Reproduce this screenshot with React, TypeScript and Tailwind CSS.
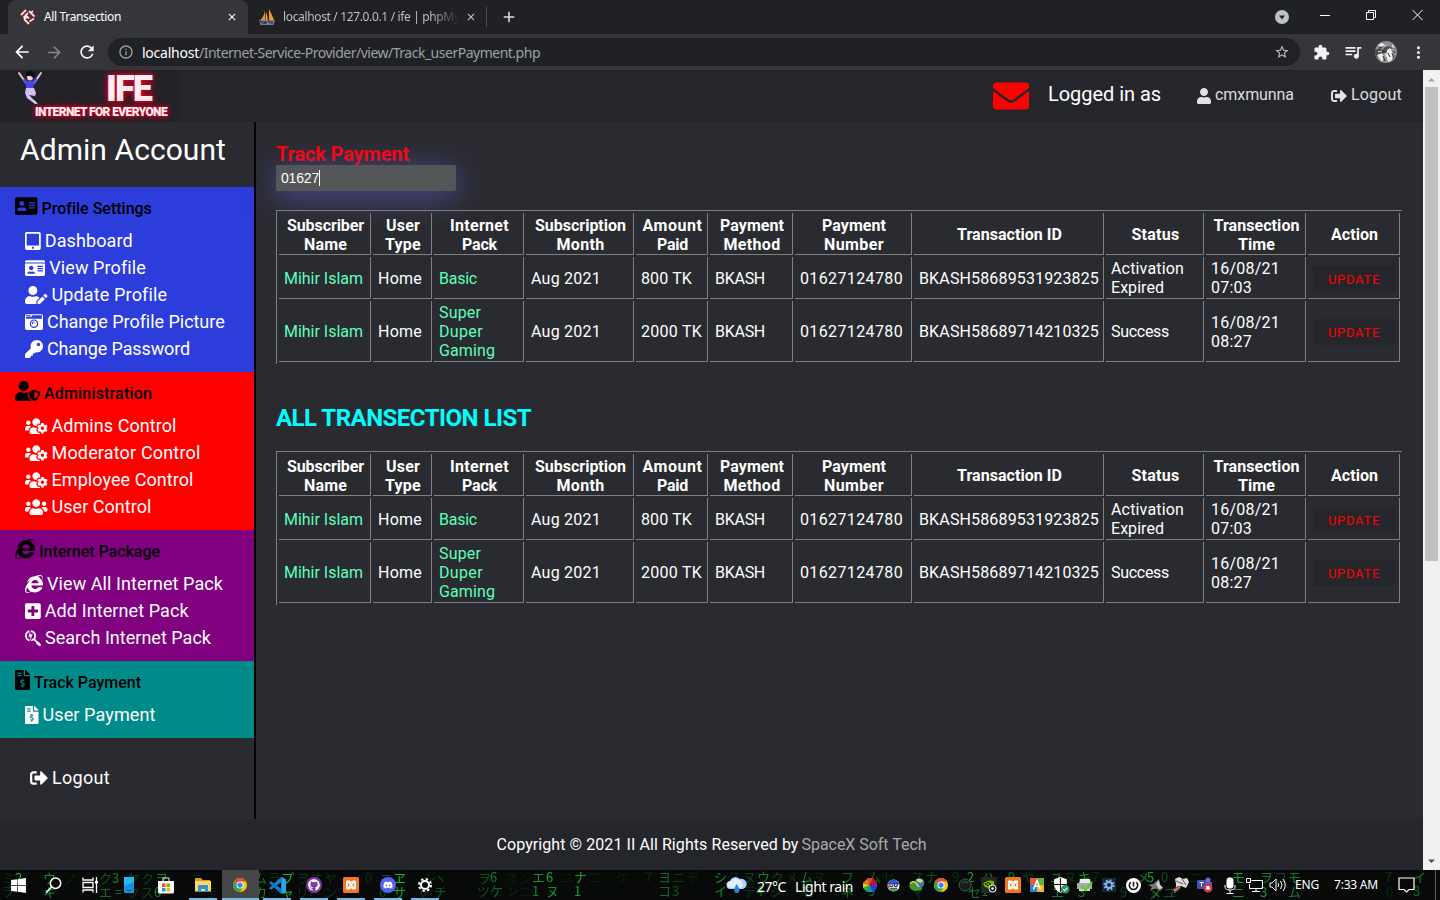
import { useLayoutEffect, useRef, useState, type ReactNode } from "react";
import {
  FaAddressCard, FaCameraRetro, FaEnvelope, FaFileInvoiceDollar, FaIdCard, FaInternetExplorer, FaKey,
  FaPlusSquare, FaSearchengin, FaSignOutAlt, FaTabletAlt, FaUser, FaUserEdit, FaUsers, FaUsersCog,
  FaUserShield, FaGithub, FaDiscord, FaWindows,
} from "react-icons/fa";
import {
  MdArrowBack, MdArrowForward, MdRefresh, MdOutlineInfo, MdStarBorder, MdExtension, MdQueueMusic, MdMoreVert,
  MdClose, MdAdd,
} from "react-icons/md";

/* A run of text whose tracking is adjusted so that it fills the given width. */
function Fit({ w, className = "", children }: { w: number; className?: string; children: string }) {
  const ref = useRef<HTMLSpanElement>(null);
  const [tracking, setTracking] = useState(0);
  useLayoutEffect(() => {
    const el = ref.current;
    if (!el) return;
    el.style.letterSpacing = "0px";
    const value = (w - el.getBoundingClientRect().width) / children.length;
    el.style.letterSpacing = `${value}px`;
    setTracking(value);
  }, [w, children]);
  return (
    <span ref={ref} className={`inline-block shrink-0 whitespace-nowrap ${className}`} style={{ letterSpacing: `${tracking}px` }}>
      {children}
    </span>
  );
}

/* ---------- Browser chrome ---------- */

function IfeFavicon() {
  return (
    <svg viewBox="0 0 16 16" className="h-4 w-4 shrink-0">
      <g fill="none" stroke="#b5303a" strokeWidth="3">
        <path d="M1 6 6 1M3.500 8.500 8 4M6 6.500l3 3M9 2l5.500 5.500M10.500 4l2.500-2M4 10l5 5M4 10l2.500-1.500M9.500 12.500 14 9.500" />
      </g>
      <g fill="none" stroke="#fff" strokeWidth="1.500">
        <path d="M1 6 6 1M3.500 8.500 8 4M6 6.500l3 3M9 2l5.500 5.500M10.500 4l2.500-2M4 10l5 5M4 10l2.500-1.500M9.500 12.500 14 9.500" />
      </g>
    </svg>
  );
}

function SailFavicon() {
  return (
    <svg viewBox="0 0 16 16" className="h-4 w-4 shrink-0">
      <path d="M6 1v10H1.500C4 8 5.500 5 6 1z" fill="#e8902a" />
      <path d="M7 3c1 3 1.500 5 1.500 8H6.500z" fill="#f6b04a" />
      <path d="M10 0c2 4 3.500 7 5 11h-5z" fill="#f29c1f" />
      <path d="M0 11h16l-1.500 5h-13z" fill="#777a96" />
      <path d="M1 12.500h2v2M5 12v3M7 12v3M5 13.500h2M9 12.500h2v2M13 12v3" stroke="#22243a" fill="none" />
    </svg>
  );
}

function TabStrip() {
  return (
    <div className="flex h-[34px] bg-[#202124] text-[12px]">
      <div className="ml-2 flex h-full w-[240px] items-center rounded-t-lg bg-[#35363a] pl-3 pr-2.5">
        <IfeFavicon />
        <Fit w={77} className="ml-[8px] text-white">All Transection</Fit>
        <MdClose className="ml-auto h-3 w-3 text-white" />
      </div>
      <div className="flex w-[238px] items-center pl-[11px]">
        <SailFavicon />
        <div className="ml-2 w-[176px] overflow-hidden bg-linear-to-r from-[#c5c8cc] from-85% to-[#202124] bg-clip-text text-transparent">
          <Fit w={184}>localhost / 127.0.0.1 / ife | phpMyA</Fit>
        </div>
        <MdClose className="ml-1.5 h-3 w-3 shrink-0 text-[#c5c8cc]" />
      </div>
      <div className="flex items-center">
        <div className="h-5 w-px bg-[#4a4c50]" />
        <MdAdd className="ml-[13px] h-[18px] w-[18px] text-[#dfe1e5]" />
      </div>
      <div className="ml-auto flex items-center">
        <svg viewBox="0 0 14 14" className="mr-[31px] h-[14px] w-[14px]">
          <circle cx="7" cy="7" r="7" fill="#bdc1c6" />
          <path d="M4 5.500h6L7 9.500z" fill="#202124" />
        </svg>
        <svg viewBox="0 0 103 12" className="mb-1 mr-[17px] h-3 w-[103px]" fill="none" stroke="#fff">
          <path d="M0 6.500h10" />
          <path d="M46.500 3.500h7v7h-7zM48.500 3v-1.500h7v7H54" />
          <path d="M92.500 1l10 10M102.500 1l-10 10" />
        </svg>
      </div>
    </div>
  );
}

function Avatar() {
  return (
    <svg viewBox="0 0 22 22" className="h-[22px] w-[22px]">
      <clipPath id="avatar"><circle cx="11" cy="11" r="11" /></clipPath>
      <g clipPath="url(#avatar)">
        <rect width="22" height="22" fill="#8b8d8f" />
        <path d="M0 9l5-2 3 2 2-4 6 1 5 6-5-1-3 3-4-2-4 3-5 1z" fill="#4a4c4e" />
        <path d="M3 4l4-2 3 2-4 2zM12 9l3-2 3 5-1 7-4 2-2-7zM2 14l5-2 2 4-2 5zM17 3l3 4-3-1z" fill="#eceded" />
        <path d="M13 12l2 4M17 12l2 5M6 10l3 1M8 15l2 5M4 7l3-1" stroke="#2a2b2d" />
        <path d="M9 6l3-2M3 11l4-1M16 8l3 2M10 12l1 4" stroke="#dcdcdc" />
      </g>
    </svg>
  );
}

function Toolbar() {
  return (
    <div className="flex h-9 items-center bg-[#35363a]">
      <div className="flex w-[108px] items-center gap-[13px] pl-3">
        <MdArrowBack className="h-5 w-5 text-white" />
        <MdArrowForward className="h-[19px] w-[19px] text-[#85878b]" />
        <MdRefresh className="h-5 w-5 text-[#f1f3f4]" />
      </div>
      <div className="flex h-7 w-[1192px] items-center rounded-full bg-[#202124] pl-2.5 pr-2.5 text-[14px]">
        <MdOutlineInfo className="h-4 w-4 text-[#9aa0a6]" />
        <Fit w={57} className="ml-2 text-white">localhost</Fit>
        <Fit w={341} className="text-[#9aa0a6]">/Internet-Service-Provider/view/Track_userPayment.php</Fit>
        <MdStarBorder className="ml-auto h-4 w-4 text-[#bdc1c6]" />
      </div>
      <div className="flex flex-1 items-center pl-[13px]">
        <MdExtension className="h-[17px] w-[17px] text-[#f1f3f4]" />
        <MdQueueMusic className="ml-[13px] h-5 w-5 text-[#f1f3f4]" />
        <div className="ml-3"><Avatar /></div>
        <MdMoreVert className="ml-[12px] h-[19px] w-[19px] text-[#f1f3f4]" />
      </div>
    </div>
  );
}

/* ---------- Page header ---------- */

function JumpingGirl() {
  return (
    <svg viewBox="0 0 26 34" className="absolute left-[17px] top-0 h-[34px] w-[26px]">
      <path d="M2 3l7 10M24 3l-7 10" stroke="#f3c3cf" strokeWidth="2" strokeLinecap="round" />
      <path d="M7.500 8l3 3h5l3.500-3.500 1 2-3.500 5v4H9v-4L6 10z" fill="#4747e6" />
      <circle cx="13" cy="7.500" r="3" fill="#f5c9d2" />
      <path d="M9 6c-.5-4 1-5 2-4.500l1 .3L13 0l1.500 1.500L17 2l1 4-2 2-2-2h-3z" fill="#0b0b10" />
      <path d="M9 18h8l2 5-1 3-6-1 7 7-1 2-8-6-2-5z" fill="#d6bdf2" />
      <path d="M17 31l3 3" stroke="#f0e7ff" strokeWidth="1.500" />
    </svg>
  );
}

function PageHeader() {
  return (
    <header className="flex h-[52px] shrink-0 items-center bg-[#25262b]">
      <div className="relative h-[52px] w-[180px] bg-[#222328]">
        <JumpingGirl />
        <div className="flex flex-col items-start text-[#ffeef2] [text-shadow:0_0_2px_#f00028,0_0_5px_#e0002a,0_0_8px_#b00024]">
          <Fit w={45} className="ml-[106px] mt-[1px] h-[34px] text-[36px] font-black leading-[36px]">IFE</Fit>
          <Fit w={132} className="ml-[35px] text-[12px] font-black leading-[14px]">INTERNET FOR EVERYONE</Fit>
        </div>
      </div>
      <FaEnvelope className="ml-[813px] h-9 w-9 text-[#ff0000]" />
      <Fit w={113} className="mb-1 ml-[19px] text-[20px] text-white">Logged in as</Fit>
      <FaUser className="ml-[36px] h-4 w-3.5 text-[#e2e2e2]" />
      <Fit w={79} className="mb-[2px] ml-1 text-[16px] text-[#dddddd]">cmxmunna</Fit>
      <FaSignOutAlt className="ml-[37px] h-4 w-4 text-[#e2e2e2]" />
      <Fit w={51} className="mb-[2px] ml-1 text-[16px] text-[#dddddd]">Logout</Fit>
    </header>
  );
}

/* ---------- Sidebar ---------- */

type Entry = [ReactNode, string, number];

const SECTIONS: { bg: string; head: Entry; items: Entry[] }[] = [
  {
    bg: "bg-[#2d3ddb]",
    head: [<FaAddressCard className="mb-[3px] h-5 w-[22.5px] shrink-0" />, "Profile Settings", 110],
    items: [
      [<FaTabletAlt className="h-[18px] w-[15.75px] shrink-0" />, "Dashboard", 88],
      [<FaIdCard className="h-[18px] w-[20.25px] shrink-0" />, "View Profile", 96],
      [<FaUserEdit className="h-[18px] w-[22.5px] shrink-0" />, "Update Profile", 115],
      [<FaCameraRetro className="h-[18px] w-[18px] shrink-0" />, "Change Profile Picture", 177],
      [<FaKey className="h-[18px] w-[18px] shrink-0" />, "Change Password", 143],
    ],
  },
  {
    bg: "bg-[#ff0000]",
    head: [<FaUserShield className="mb-[3px] h-5 w-[25px] shrink-0" />, "Administration", 108],
    items: [
      [<FaUsersCog className="h-[18px] w-[22.5px] shrink-0" />, "Admins Control", 125],
      [<FaUsersCog className="h-[18px] w-[22.5px] shrink-0" />, "Moderator Control", 149],
      [<FaUsersCog className="h-[18px] w-[22.5px] shrink-0" />, "Employee Control", 142],
      [<FaUsers className="h-[18px] w-[22.5px] shrink-0" />, "User Control", 100],
    ],
  },
  {
    bg: "bg-[#800080]",
    head: [<FaInternetExplorer className="mb-[3px] h-5 w-5 shrink-0" />, "Internet Package", 121],
    items: [
      [<FaInternetExplorer className="h-[18px] w-[18px] shrink-0" />, "View All Internet Pack", 176],
      [<FaPlusSquare className="h-[18px] w-[15.75px] shrink-0" />, "Add Internet Pack", 144],
      [<FaSearchengin className="h-[18px] w-[16px] shrink-0" />, "Search Internet Pack", 166],
    ],
  },
  {
    bg: "bg-[#008b8b]",
    head: [<FaFileInvoiceDollar className="mb-[3px] h-5 w-[15px] shrink-0" />, "Track Payment", 107],
    items: [[<FaFileInvoiceDollar className="h-[18px] w-[13.5px] shrink-0" />, "User Payment", 113]],
  },
];

function Sidebar() {
  return (
    <aside className="flex w-[256px] shrink-0 flex-col border-r-2 border-black text-white">
      <h1 className="h-[65px] pl-5 pt-[7px] text-[30px] leading-[42px]">
        <Fit w={206}>Admin Account</Fit>
      </h1>
      {SECTIONS.map(({ bg, head, items }) => (
        <section key={head[1]} className={`${bg} pb-[10px]`}>
          <h2 className="flex h-[40px] items-center gap-[4px] pl-[15px] text-[16px] font-medium text-black">
            {head[0]}
            <Fit w={head[2]} className="mt-[3px]">{head[1]}</Fit>
          </h2>
          <ul>
            {items.map(([icon, label, w]) => (
              <li key={label} className="flex h-[27px] items-center gap-[4px] pl-[25px] text-[18px]">
                {icon}
                <Fit w={w}>{label}</Fit>
              </li>
            ))}
          </ul>
        </section>
      ))}
      <div className="mt-[26px] flex h-[27px] items-center gap-[4px] pl-[30px] text-[18px]">
        <FaSignOutAlt className="h-[18px] w-[18px] shrink-0" />
        <Fit w={58}>Logout</Fit>
      </div>
    </aside>
  );
}

/* ---------- Payments ---------- */

const COLUMNS: { width: string; lines: [string, number][] }[] = [
  { width: "w-[92px]", lines: [["Subscriber", 77], ["Name", 43]] },
  { width: "w-[59px]", lines: [["User", 34], ["Type", 36]] },
  { width: "w-[90px]", lines: [["Internet", 59], ["Pack", 35]] },
  { width: "w-[108px]", lines: [["Subscription", 91], ["Month", 48]] },
  { width: "w-[72px]", lines: [["Amount", 60], ["Paid", 31]] },
  { width: "w-[83px]", lines: [["Payment", 64], ["Method", 57]] },
  { width: "w-[117px]", lines: [["Payment", 64], ["Number", 60]] },
  { width: "w-[190px]", lines: [["Transaction ID", 105]] },
  { width: "w-[98px]", lines: [["Status", 48]] },
  { width: "w-[100px]", lines: [["Transection", 86], ["Time", 37]] },
  { width: "w-[92px]", lines: [["Action", 47]] },
];

type Cell = [string, number][];

const ROWS: { height: string; cells: Cell[] }[] = [
  {
    height: "h-[42px]",
    cells: [
      [["Mihir Islam", 79]], [["Home", 44]], [["Basic", 38]], [["Aug 2021", 70]], [["800 TK", 51]], [["BKASH", 50]],
      [["01627124780", 103]], [["BKASH58689531923825", 180]], [["Activation", 73], ["Expired", 53]],
      [["16/08/21", 69], ["07:03", 41]],
    ],
  },
  {
    height: "h-[61px]",
    cells: [
      [["Mihir Islam", 79]], [["Home", 44]], [["Super", 42], ["Duper", 44], ["Gaming", 56]], [["Aug 2021", 70]],
      [["2000 TK", 61]], [["BKASH", 50]], [["01627124780", 103]], [["BKASH58689714210325", 180]], [["Success", 58]],
      [["16/08/21", 69], ["08:27", 41]],
    ],
  },
];

function PaymentTable() {
  return (
    <table className="w-[1126px] table-fixed border-separate border-spacing-[2px] border-l border-t border-[#808080] text-[16px] leading-[19px] text-white">
      <thead>
        <tr className="h-[42px]">
          {COLUMNS.map(({ width, lines }, i) => (
            <th key={i} className={`${width} border-b border-r border-[#808080] p-0 align-middle font-bold`}>
              <div className="flex flex-col items-center pl-[2px] pt-[2px]">
                {lines.map(([text, w]) => <Fit key={text} w={w}>{text}</Fit>)}
              </div>
            </th>
          ))}
        </tr>
      </thead>
      <tbody>
        {ROWS.map(({ height, cells }, r) => (
          <tr key={r} className={height}>
            {cells.map((cell, c) => (
              <td key={c} className={`border-b border-r border-[#808080] py-0 pl-[5px] pr-0 align-middle ${c === 0 || c === 2 ? "text-[#5dffbe]" : ""}`}>
                <div className="flex flex-col items-start pt-[1px]">
                  {cell.map(([text, w]) => <Fit key={text} w={w}>{text}</Fit>)}
                </div>
              </td>
            ))}
            <td className="border-b border-r border-[#808080] p-0 align-middle">
              <button className="ml-[5px] mt-[2px] flex h-[26px] w-[82px] items-center justify-center bg-[#25262b] pt-[1px] text-[13px] text-[#ff0000]">
                <Fit w={52}>UPDATE</Fit>
              </button>
            </td>
          </tr>
        ))}
      </tbody>
    </table>
  );
}

function Payments() {
  return (
    <main className="flex-1 pl-5 pt-[21px]">
      <label className="flex h-[22px] items-center text-[20px] font-bold leading-[22px] text-[#ff0008]">
        <Fit w={133}>Track Payment</Fit>
      </label>
      <div className="relative flex h-[26px] w-[180px] items-center rounded-[2px] bg-[#555659] pl-[5px] text-[14px] text-white shadow-[0_5px_30px_rgba(92,88,190,0.75)] [font-family:'Liberation_Sans',Arial,sans-serif]">
        <Fit w={38}>01627</Fit>
        <span className="h-4 w-px bg-white" />
      </div>
      <div className="mt-[19px]"><PaymentTable /></div>
      <h2 className="mb-[19px] mt-[39px] flex h-[29px] items-center text-[24px] font-bold text-[#00ffff]">
        <Fit w={255}>ALL TRANSECTION LIST</Fit>
      </h2>
      <PaymentTable />
    </main>
  );
}

function Scrollbar() {
  return (
    <div className="flex w-[17px] shrink-0 flex-col items-center bg-[#f1f1f1]">
      <svg viewBox="0 0 17 17" className="h-[17px] w-[17px]"><path d="M5 11.500 8.500 8l3.500 3.500z" fill="#a3a3a3" /></svg>
      <div className="h-[474px] w-[13px] bg-[#c1c1c1]" />
      <svg viewBox="0 0 17 17" className="mt-auto h-[17px] w-[17px]"><path d="M5 6.500h7L8.500 10z" fill="#505050" /></svg>
    </div>
  );
}

/* ---------- Taskbar ---------- */

const RAIN: [number, number, string, string][] = [
  [2, 1, "ミ", "opacity-15"], [15, 1, "2", "opacity-90"], [43, 1, "ウ", "opacity-75"], [43, 15, "キ", "opacity-65"],
  [2, 14, "ヲ", "opacity-25"], [64, 1, "ノ", "opacity-15"], [99, 1, "ク", "opacity-40"], [112, 1, "3", "opacity-60"],
  [99, 15, "エ", "opacity-50"], [115, 15, "=", "opacity-65"], [127, 1, "ヤ", "opacity-30"], [127, 15, "ク", "opacity-25"],
  [141, 1, "ク", "opacity-30"], [141, 15, "ス", "opacity-30"], [155, 1, "ヲ", "opacity-65"], [154, 15, "6", "opacity-65"],
  [190, 1, "ニ", "opacity-15"], [205, 15, "テ", "opacity-15"], [240, 1, "ル", "opacity-20"], [254, 1, "ム", "opacity-60"],
  [254, 15, "カ", "opacity-65"], [268, 1, "ラ", "opacity-20"], [281, 1, "プ", "opacity-90"], [281, 15, "ャ", "opacity-90"],
  [297, 1, "ヲ", "opacity-20"], [296, 15, "リ", "opacity-20"], [310, 1, "オ", "opacity-20"], [324, 1, "ヤ", "opacity-20"],
  [324, 15, "ン", "opacity-20"], [365, 1, "0", "opacity-20"], [380, 1, "ニ", "opacity-40"], [379, 15, "6", "opacity-30"],
  [393, 1, "ヱ", "opacity-90"], [393, 15, "サ", "opacity-80"], [420, 15, "0", "opacity-25"], [423, 1, "シ", "opacity-25"],
  [434, 1, "ヽ", "opacity-35"], [434, 15, "チ", "opacity-40"], [478, 1, "ヲ", "opacity-35"], [490, 0, "6", "opacity-60"],
  [477, 14, "ツ", "opacity-35"], [490, 14, "ケ", "opacity-50"], [506, 1, "オ", "opacity-10"], [519, 1, "ン", "opacity-10"],
  [506, 14, "ン", "opacity-15"], [519, 14, "ニ", "opacity-10"], [532, 0, "エ", "opacity-70"], [546, 0, "6", "opacity-85"],
  [532, 14, "1", "opacity-65"], [546, 14, "ヌ", "opacity-70"], [574, 0, "ナ", "opacity-80"], [574, 14, "1", "opacity-80"],
  [561, 0, "ユ", "opacity-10"], [588, 0, "ニ", "opacity-10"], [616, 0, "ケ", "opacity-10"], [645, 0, "7", "opacity-15"],
  [658, 0, "ヨ", "opacity-50"], [672, 0, "ニ", "opacity-25"], [658, 14, "コ", "opacity-50"], [672, 14, "3", "opacity-40"],
  [686, 0, "デ", "opacity-10"], [714, 0, "シ", "opacity-70"], [714, 14, "イ", "opacity-65"], [728, 0, "ス", "opacity-15"],
  [743, 0, "ヌ", "opacity-30"], [757, 0, "ウ", "opacity-60"], [771, 0, "ク", "opacity-30"], [743, 14, "テ", "opacity-20"],
  [756, 14, "4", "opacity-50"], [770, 14, "シ", "opacity-30"], [785, 0, "メ", "opacity-20"], [800, 0, "ム", "opacity-60"],
  [800, 14, "モ", "opacity-40"], [813, 0, "ヌ", "opacity-15"], [841, 0, "フ", "opacity-50"], [841, 14, "ネ", "opacity-55"],
  [868, 0, "ム", "opacity-50"], [868, 14, "9", "opacity-50"], [882, 0, "セ", "opacity-15"], [911, 0, "ス", "opacity-30"],
  [911, 14, "マ", "opacity-25"], [925, 0, "ナ", "opacity-35"], [952, 0, "9", "opacity-20"], [967, 0, "2", "opacity-80"],
  [968, 15, "セ", "opacity-60"], [982, 0, "ハ", "opacity-60"], [981, 14, "1", "opacity-60"], [1008, 0, "9", "opacity-60"],
  [1022, 0, "ヤ", "opacity-25"], [1050, 0, "ユ", "opacity-60"], [1051, 15, "エ", "opacity-60"], [1064, 0, "ヌ", "opacity-20"],
  [1078, 0, "キ", "opacity-70"], [1078, 15, "3", "opacity-60"], [1092, 0, "7", "opacity-15"], [1120, 15, "9", "opacity-30"],
  [1137, 0, "メ", "opacity-60"], [1147, 0, "5", "opacity-80"], [1161, 0, "0", "opacity-35"], [1149, 15, "ヌ", "opacity-65"],
  [1163, 15, "ユ", "opacity-40"], [1190, 0, "ニ", "opacity-15"], [1232, 0, "モ", "opacity-80"], [1232, 15, "ニ", "opacity-75"],
  [1260, 0, "ヲ", "opacity-60"], [1260, 15, "3", "opacity-75"], [1274, 0, "コ", "opacity-30"], [1288, 0, "モ", "opacity-60"],
  [1288, 15, "ム", "opacity-60"], [1385, 0, "7", "opacity-20"], [1386, 15, "0", "opacity-15"], [1413, 0, "イ", "opacity-60"],
  [1413, 14, "3", "opacity-50"],
];

function Chrome({ className }: { className: string }) {
  return (
    <svg viewBox="0 0 16 16" className={className}>
      <circle cx="8" cy="8" r="8" fill="#f9c718" />
      <path d="M8 8 1.100 4A8 8 0 0 1 14.900 4H8z" fill="#e34a3b" />
      <path d="M1.100 4A8 8 0 0 0 8 16l3.500-6L8 8z" fill="#2fa650" />
      <circle cx="8" cy="8" r="4" fill="#fff" />
      <circle cx="8" cy="8" r="3" fill="#3e82ee" />
    </svg>
  );
}

function Xampp({ className }: { className: string }) {
  return (
    <svg viewBox="0 0 16 16" className={className}>
      <rect width="16" height="16" rx="1.500" fill="#f37623" />
      <path d="M4.800 5 11.200 11M11.200 5l-6.400 6M5 8H3.800V4.200h2.500L8 5.800l1.700-1.600h2.500V8H11M5 8H3.800v3.800h2.500L8 10.200l1.700 1.600h2.500V8" stroke="#fff" strokeWidth="1.500" strokeLinejoin="round" fill="none" />
    </svg>
  );
}

const PINNED: { icon: ReactNode; open?: boolean; active?: boolean }[] = [
  { icon: <FaWindows className="mr-px h-[17px] w-[17px] text-white" /> },
  {
    icon: (
      <svg viewBox="0 0 17 17" className="mr-[4px] h-[17px] w-[17px]" fill="none" stroke="#fff" strokeWidth="1.500">
        <circle cx="10.500" cy="6.200" r="5.200" /><path d="M6.500 10 1 16" />
      </svg>
    ),
  },
  {
    icon: (
      <svg viewBox="0 0 17 16" className="mr-[5px] h-4 w-[17px]" fill="none" stroke="#fff" strokeWidth="1.300">
        <path d="M1 .5V3h10V.5M1 15.500V13h10v2.500M1 5.500h10v5H1zM14.500 0v16" /><path d="M13 4h3v2.500h-3z" fill="#fff" stroke="none" />
      </svg>
    ),
  },
  {
    icon: (
      <svg viewBox="0 0 10 16" className="mr-px h-4 w-2.5"><rect width="10" height="16" rx=".5" fill="#1691dc" /><path d="M0 0h10v5L0 9z" fill="#28b8ee" /><path d="M3 13.500h4" stroke="#09528b" /></svg>
    ),
  },
  {
    icon: (
      <svg viewBox="0 0 16 17" className="mr-[2px] h-[17px] w-4">
        <path d="M5 5V1h6v4" fill="none" stroke="#eee" /><path d="M0 4h16v11q0 1.500-1.500 1.500h-13Q0 16.500 0 15z" fill="#f6f6f6" />
        <path d="M4 6.500h3.500V10H4z" fill="#ef5130" /><path d="M8.500 6.500H12V10H8.500z" fill="#7eb813" />
        <path d="M4 11h3.500v3.500H4z" fill="#179fe3" /><path d="M8.500 11H12v3.500H8.500z" fill="#fab900" />
      </svg>
    ),
  },
  {
    icon: (
      <svg viewBox="0 0 16 14" className="mr-[2px] h-3.5 w-4">
        <path d="M0 0h6l1.500 2H15v3H0z" fill="#d99d16" /><path d="M0 3h16v10.500H0z" fill="#ffd767" />
        <path d="M3 14V8q0-1 1-1h8q1 0 1 1v6h-3v-3H6v3z" fill="#2c94dc" />
      </svg>
    ),
    open: true,
  },
  { icon: <Chrome className="mr-[2px] h-3.5 w-3.5" />, open: true, active: true },
  {
    icon: (
      <svg viewBox="0 0 16 16" className="mr-px h-[17px] w-[17px]">
        <path d="M11.500 0 16 2v12l-4.500 2z" fill="#2aa7f2" /><path d="M11.500 0v5L2 12 0 10.500z" fill="#1b80c6" /><path d="M11.500 16v-5L2 4 0 5.500z" fill="#1479bd" />
      </svg>
    ),
    open: true,
  },
  {
    icon: <span className="mr-[2px] flex h-4 w-4 items-center justify-center rounded-full bg-[#7b3ca6]"><FaGithub className="h-3 w-3 text-white" /></span>,
    open: true,
  },
  { icon: <Xampp className="mr-[2px] h-4 w-4" />, open: true },
  {
    icon: <span className="mr-[2px] flex h-4 w-4 items-center justify-center rounded-full bg-[#5865f2]"><FaDiscord className="h-2.5 w-2.5 text-white" /></span>,
    open: true,
  },
  {
    icon: (
      <svg viewBox="0 0 14 14" className="mr-[2px] h-3.5 w-3.5" fill="none" stroke="#fff">
        <circle cx="7" cy="7" r="4" strokeWidth="2" />
        <circle cx="7" cy="7" r="6" strokeWidth="2" strokeDasharray="2.350 2.360" />
      </svg>
    ),
    open: true,
  },
];

const TRAY: ReactNode[] = [
  <svg viewBox="0 0 14 14" className="h-3.5 w-3.5">
    <path d="M7 7 5 0h5z" fill="#f23a20" /><path d="m7 7 3-7 4 5z" fill="#c41633" /><path d="m7 7 7-2v5z" fill="#8423b4" />
    <path d="m7 7 7 3-4 4z" fill="#2643dc" /><path d="m7 7 3 7H4z" fill="#178cc0" /><path d="m7 7-3 7-4-4z" fill="#27b936" />
    <path d="M7 7 0 10V5z" fill="#eac71d" /><path d="M7 7 0 5l5-5z" fill="#f1781a" />
  </svg>,
  <svg viewBox="0 0 14 14" className="mr-[2px] h-[13px] w-[13px]">
    <circle cx="7" cy="7" r="6.500" fill="#e9edf8" /><path d="M1 4q6-7 12 0v2H1z" fill="#3254d0" /><path d="M2 11q5 5 10 0z" fill="#38a340" />
    <path d="M1 7h12v3H1z" fill="#fff" /><path d="M3 6v2h3V6M8 5v3h3V5M3 10h8" stroke="#151515" fill="none" /><path d="M0 5l2 5" stroke="#df3030" strokeWidth="1.500" />
  </svg>,
  <svg viewBox="0 0 16 14" className="mr-[2px] h-3.5 w-4">
    <path d="M0 8q2-4 6-4l3 3 3 1 1 4-6 1q-5 0-7-5z" fill="#3f9c2c" /><circle cx="10.500" cy="5" r="4.800" fill="#397cbb" />
    <path d="M7 2q4-3 7 1-2 4-7-1z" fill="#d6df44" /><path d="M1 6q3-4 6-1l3 4" stroke="#f0d532" strokeWidth="1.500" fill="none" />
  </svg>,
  <Chrome className="mr-[2px] h-3.5 w-3.5" />,
  <svg viewBox="0 0 15 14" className="mr-[2px] h-3.5 w-[15px]" fill="none" stroke="#3f5950"><circle cx="7" cy="7" r="6" fill="#15201c" /><path d="M4 5q3-3 6 0M11 11l3 2" /></svg>,
  <svg viewBox="0 0 16 16" className="mr-[2px] h-4 w-4">
    <rect width="16" height="16" fill="#262626" /><path d="M2 7q4-5 11-3v4q-4 4-9 2z" fill="#76b900" /><path d="M4 7q3-3 6 0-3 3-6 0" stroke="#1a2a00" fill="none" />
    <circle cx="11.500" cy="11.500" r="3.500" fill="#161616" stroke="#fff" /><circle cx="11.500" cy="11.500" r="1.300" fill="#fff" />
  </svg>,
  <Xampp className="mr-[2px] h-4 w-4" />,
  <svg viewBox="0 0 16 16" className="mr-[2px] h-3.5 w-3.5">
    <path d="M0 0h8v8H0z" fill="#e9543b" /><path d="M8 0h8v8H8z" fill="#65ae38" /><path d="M0 8h8v8H0z" fill="#2585d2" /><path d="M8 8h8v8H8z" fill="#efb526" />
    <path d="m4 13 4-10 4 10M5.500 9.500h5" stroke="#fff" strokeWidth="1.800" fill="none" />
  </svg>,
  <svg viewBox="0 0 16 16" className="mr-[2px] h-[17px] w-[17px]">
    <path d="M7 0 13 2v5q0 5-6 8-6-3-6-8V2z" fill="#fff" /><path d="M7 1v13M1 7h12" stroke="#111" /><circle cx="11.500" cy="11.500" r="4" fill="#29936a" /><path d="m9.500 11.500 1.500 1.500 2.500-3" stroke="#fff" fill="none" />
  </svg>,
  <svg viewBox="0 0 16 16" className="mr-[2px] h-4 w-4">
    <path d="M3 2h10l1 5H2z" fill="#ececec" /><path d="M0 6h15v6H0z" fill="#a8acae" /><path d="M2 12h11v2H2z" fill="#d5d5d5" /><path d="m5 9 3.500 4L15 5" stroke="#5dcc31" strokeWidth="2.400" fill="none" />
  </svg>,
  <svg viewBox="0 0 16 16" className="mr-[2px] h-3.5 w-3.5">
    <rect width="16" height="16" fill="#14283b" /><circle cx="8" cy="8" r="3.500" fill="none" stroke="#86b8e7" strokeWidth="2.200" /><circle cx="8" cy="8" r="5.500" fill="none" stroke="#86b8e7" strokeWidth="2" strokeDasharray="2.160" />
  </svg>,
  <svg viewBox="0 0 16 16" className="mr-[2px] h-[15px] w-[15px]"><circle cx="8" cy="8" r="8" fill="#fff" /><path d="M8 4v5M5 4.500q-3 3 0 6.500 3 2.500 6 0 3-3.500 0-6.500" stroke="#111" strokeWidth="1.600" fill="none" /></svg>,
  <svg viewBox="0 0 16 14" className="mr-[4px] h-3.5 w-4"><path d="M0 7l5-1 6-5v4l4 5-3 3-4-3-6 3 2-4z" fill="#777" /><path d="m8 6 3-4 1 5 3 3-4 1z" fill="#d0d0d0" /></svg>,
  <svg viewBox="0 0 16 16" className="mr-[3px] h-4 w-4">
    <path d="M2 2l4-2 4 2 4-1 2 4-3 6-5-2-5 2V7z" fill="#dededf" /><path d="m3 4 7 3M9 2l4 6" stroke="#555" /><path d="m0 13 6-4" stroke="#e42635" strokeWidth="1.500" /><path d="m1 14 6-4" stroke="#e4c926" strokeWidth="1.500" /><path d="m1 16 6-5" stroke="#2665d8" strokeWidth="1.500" />
  </svg>,
  <svg viewBox="0 0 16 16" className="mr-[3px] h-4 w-4">
    <circle cx="11" cy="3" r="2.500" fill="#6873ce" /><path d="M9 5h6v6H8z" fill="#5260bd" /><rect y="3" width="9" height="9" rx="1" fill="#4450ad" /><path d="M2.500 5.500h4M4.500 5.500v4" stroke="#fff" />
    <circle cx="11" cy="11" r="4.500" fill="#d3344b" /><path d="M8.500 12.500h5l-1-1.500v-2h-3v2z" fill="#fff" />
  </svg>,
];

function Taskbar() {
  return (
    <div className="relative h-[30px] overflow-hidden bg-[#080a09] text-white">
      <div className="absolute inset-0 text-[13px] leading-[14px] text-[#12c83c] [font-family:'Noto_Sans_CJK_JP',sans-serif]">
        {RAIN.map(([x, y, glyph, opacity], i) => (
          <span key={i} className={`absolute ${opacity}`} style={{ left: x, top: y }}>{glyph}</span>
        ))}
      </div>
      <div className="relative flex h-full items-center">
        <div className="flex h-full">
          {PINNED.map(({ icon, open, active }, i) => (
            <div key={i} className={`flex h-full w-[37px] flex-col items-center ${active ? "bg-[#464646]" : ""}`}>
              <div className="flex h-7 items-center pt-[2px]">{icon}</div>
              {open && <div className={`h-[2px] bg-[#76b9ed] ${active ? "w-full" : "mr-[2px] w-7"}`} />}
            </div>
          ))}
        </div>
        <svg viewBox="0 0 22 18" className="ml-[282px] h-[18px] w-[22px]">
          <path d="M5 13a4 4 0 0 1-1-8 6 6 0 0 1 10-2 5 5 0 0 1 3 10z" fill="#a9d2fa" />
          <path d="M5 12a3.500 3.500 0 0 1 0-7 5 5 0 0 1 8-1 4.500 4.500 0 0 1 2 8z" fill="#e0efff" />
          <path d="M10.500 8q4 5 2.500 8-2.500 2-4.500 0-1-3 2-8" fill="#2788e4" />
        </svg>
        <Fit w={29} className="ml-[9px] mt-[2px] text-[14px]">27°C</Fit>
        <Fit w={58} className="ml-[9px] mt-[2px] text-[14px]">Light rain</Fit>
        <div className="ml-[5px] flex items-center">
          {TRAY.map((icon, i) => <div key={i} className="flex w-6 justify-center">{icon}</div>)}
        </div>
        <div className="ml-[6px] flex items-center gap-[6px]">
          <svg viewBox="0 0 12 17" className="mr-[4px] h-[17px] w-3" fill="none" stroke="#fff"><rect x="3" y="1" width="6" height="10" rx="2" fill="#fff" /><path d="M1 8v2q0 3 5 3t5-3V8M6 13v3.500M2.500 16.500h7" /></svg>
          <svg viewBox="0 0 17 14" className="h-3.5 w-[17px]" fill="none" stroke="#fff"><path d="M5.500 2.500h11v8H3.500V6M.5.500h4v4h-4zM10 10.500v3M6 13.500h8" /></svg>
          <svg viewBox="0 0 17 14" className="h-3.5 w-[17px]" fill="none" stroke="#fff"><path d="M1 5h2l4-4v12L3 9H1zM9 5q1.500 2 0 4M11.500 3q3 4 0 8M14 1q4.500 6 0 12" /></svg>
        </div>
        <Fit w={24} className="ml-[9px] text-[12px]">ENG</Fit>
        <Fit w={44} className="ml-[15px] text-[12px]">7:33 AM</Fit>
        <svg viewBox="0 0 17 16" className="ml-[20px] h-4 w-[17px]" fill="none" stroke="#fff" strokeWidth="1.200"><path d="M1 1h15v11.500h-5L8.500 15 6 12.500H1z" /></svg>
        <div className="ml-auto mr-[4px] h-full w-px bg-[#5b5b5b]" />
      </div>
    </div>
  );
}

export default function App() {
  return (
    <div className="flex h-[900px] w-[1440px] flex-col overflow-hidden [font-family:'Noto_Sans','Open_Sans',sans-serif]">
      <TabStrip />
      <Toolbar />
      <div className="flex h-[800px]">
        <div className="flex w-[1423px] flex-col bg-[#2a2b30] [font-family:Roboto,'Noto_Sans',sans-serif]">
          <PageHeader />
          <div className="flex h-[697px]">
            <Sidebar />
            <Payments />
          </div>
          <footer className="flex h-[51px] items-center justify-center gap-[3px] bg-[#25262b] text-[16px] text-white">
            <Fit w={302}>Copyright © 2021 II All Rights Reserved by</Fit>
            <Fit w={125} className="text-[#aaaaaa]">SpaceX Soft Tech</Fit>
          </footer>
        </div>
        <Scrollbar />
      </div>
      <Taskbar />
    </div>
  );
}
